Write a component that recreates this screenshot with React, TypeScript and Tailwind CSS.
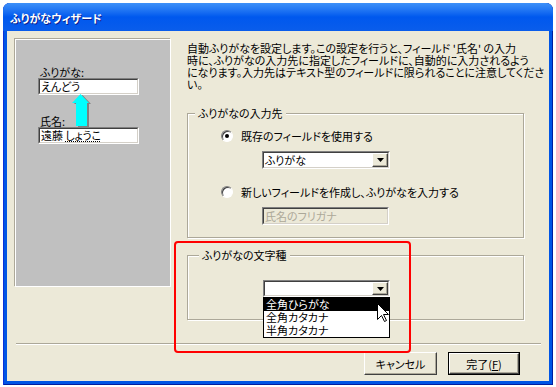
import React from 'react'

const font = "font-['Noto_Sans_CJK_JP',sans-serif] [font-feature-settings:'palt']"

// classic sunken edit border
function Sunken({ className = '', inner = 'bg-white', children }: { className?: string; inner?: string; children?: React.ReactNode }) {
  return (
    <div className={`border border-t-[#808080] border-l-[#808080] border-b-white border-r-white ${className}`}>
      <div className={`flex h-full items-center border border-t-[#404040] border-l-[#404040] border-b-[#D4D0C8] border-r-[#D4D0C8] ${inner}`}>
        {children}
      </div>
    </div>
  )
}

function DropButton() {
  return (
    <div className="ml-auto flex h-full w-[16px] items-center justify-center border border-t-white border-l-white border-b-[#404040] border-r-[#404040] bg-[#ECE9D8] shadow-[inset_-1px_-1px_0_#ACA899]">
      <svg width="7" height="4" viewBox="0 0 7 4">
        <path d="M0 0h7L3.5 4z" fill="#000" />
      </svg>
    </div>
  )
}

function Radio({ checked }: { checked?: boolean }) {
  return (
    <div className="flex h-[12px] w-[12px] shrink-0 items-center justify-center rounded-full border border-t-[#808080] border-l-[#808080] border-b-white border-r-white bg-white shadow-[inset_1px_1px_0_#404040]">
      {checked && <div className="h-[4px] w-[4px] rounded-full bg-black" />}
    </div>
  )
}

function Button({ children, primary }: { children: React.ReactNode; primary?: boolean }) {
  return (
    <div className={`h-[23px] ${primary ? 'w-[72px] border border-black' : 'w-[73px]'}`}>
      <div className="flex h-full items-center justify-center border border-t-white border-l-white border-b-[#404040] border-r-[#404040] bg-[#ECE9D8] shadow-[inset_-1px_-1px_0_#ACA899]">
        {children}
      </div>
    </div>
  )
}

export default function App() {
  return (
    <div className={`h-[387px] w-[556px] bg-white px-[3px] pt-[3px] text-[11px] leading-[12px] text-black ${font}`}>
      <div className="flex h-[382px] w-[550px] flex-col rounded-t-[7px] bg-[#0055E5] shadow-[inset_1px_0_0_#0831D9,inset_-1px_0_0_#001EA0,inset_0_-1px_0_#001EA0]">
        {/* title bar */}
        <div className="flex h-[28px] items-center rounded-t-[7px] bg-gradient-to-b from-[#3D90F8] via-[#0058EE] to-[#0A5DEB] px-[7px] pt-[2px]">
          <span className="font-bold text-white [text-shadow:1px_1px_0_#0A1E8C]">ふりがなウィザード</span>
        </div>

        <div className="relative mx-[4px] flex h-[350px] flex-col bg-[#ECE9D8]">
          <div className="flex h-[312px] pl-[8px] pt-[8px]">
            {/* preview panel */}
            <div className="h-[248px] w-[156px] shrink-0 border border-white bg-[#C0C0C0] pl-[22px] pt-[26px] shadow-[-1px_-1px_0_#ACA899]">
              <div className="ml-[2px] h-[12px]">ふりがな:</div>
              <Sunken className="h-[17px] w-[101px]">
                <span className="pl-[1px] leading-[13px]">えんどう</span>
              </Sunken>
              <div className="flex h-[32px] items-end">
                <div className="ml-[2px] w-[32px] shrink-0">氏名:</div>
                <svg width="21" height="33" viewBox="0 0 21 33" className="-mt-[1px] self-start">
                  <path d="M10.5 1L19 10H17V33H6V10H2Z" fill="#808080" />
                  <path d="M8.5 0L17 9H15V32H4V9H0Z" fill="#00FFFF" />
                </svg>
              </div>
              <Sunken className="h-[17px] w-[101px]">
                <span className="pl-[1px] leading-[13px]">
                  遠藤 <span className="underline decoration-dotted underline-offset-1">しょうこ</span>
                </span>
              </Sunken>
            </div>

            {/* right column */}
            <div className="ml-[16px] flex flex-col">
              <div className="mt-[3px] whitespace-nowrap">
                <div>自動ふりがなを設定します。この設定を行うと、フィールド '氏名' の入力</div>
                <div>時に、ふりがなの入力先に指定したフィールドに、自動的に入力されるよう</div>
                <div>になります。入力先はテキスト型のフィールドに限られることに注意してくださ</div>
                <div>い。</div>
              </div>

              <fieldset className="mt-[17px] w-[337px] border border-[#ACA899] pb-[12px] shadow-[inset_1px_1px_0_#fff,1px_1px_0_#fff]">
                <legend className="ml-[7px] bg-[#ECE9D8] px-[3px]">ふりがなの入力先</legend>
                <div className="ml-[33px] mt-[11px] flex items-center">
                  <Radio checked />
                  <span className="ml-[8px]">既存のフィールドを使用する</span>
                </div>
                <Sunken className="ml-[74px] mt-[9px] h-[18px] w-[128px]">
                  <span className="pl-[1px] leading-[14px]">ふりがな</span>
                  <DropButton />
                </Sunken>
                <div className="ml-[33px] mt-[17px] flex items-center">
                  <Radio />
                  <span className="ml-[8px]">新しいフィールドを作成し、ふりがなを入力する</span>
                </div>
                <Sunken className="ml-[74px] mt-[9px] h-[18px] w-[127px]" inner="bg-[#ECE9D8]">
                  <span className="pl-[1px] leading-[14px] text-[#ACA899]">氏名のフリガナ</span>
                </Sunken>
              </fieldset>

              <fieldset className="mt-[11px] w-[337px] border border-[#ACA899] pb-[22px] shadow-[inset_1px_1px_0_#fff,1px_1px_0_#fff]">
                <legend className="ml-[11px] bg-[#ECE9D8] px-[3px]">ふりがなの文字種</legend>
                <div className="relative ml-[75px] mt-[19px] w-[127px]">
                  <Sunken className="h-[17px] w-[127px]">
                    <DropButton />
                  </Sunken>
                  <div className="absolute left-0 top-full z-10 w-[127px] border border-black bg-white">
                    <div className="h-[13px] bg-black pl-[2px] leading-[13px] text-white">全角ひらがな</div>
                    <div className="h-[13px] pl-[2px] leading-[13px]">全角カタカナ</div>
                    <div className="h-[13px] pl-[2px] leading-[13px]">半角カタカナ</div>
                  </div>
                </div>
              </fieldset>
            </div>
          </div>

          <div className="ml-[9px] mr-[8px] h-[2px] border-t border-b border-t-[#ACA899] border-b-white" />

          <div className="mt-[7px] flex justify-end gap-[11px] pr-[29px]">
            <Button>キャンセル</Button>
            <Button primary>
              完了(<span className="underline">F</span>)
            </Button>
          </div>

          {/* red highlight annotation */}
          <div className="absolute left-[167px] top-[210px] z-20 h-[112px] w-[237px] rounded-[4px] border-2 border-[#FF0000]" />

          {/* mouse pointer */}
          <svg width="13" height="20" viewBox="0 0 13 20" className="absolute left-[370px] top-[272px] z-30">
            <path d="M0.5 0.5V16.5L4.5 12.5L7.5 18.5L9.5 17.5L6.5 11.5H11.5Z" fill="#fff" stroke="#000" strokeLinejoin="miter" />
          </svg>
        </div>
      </div>
    </div>
  )
}
